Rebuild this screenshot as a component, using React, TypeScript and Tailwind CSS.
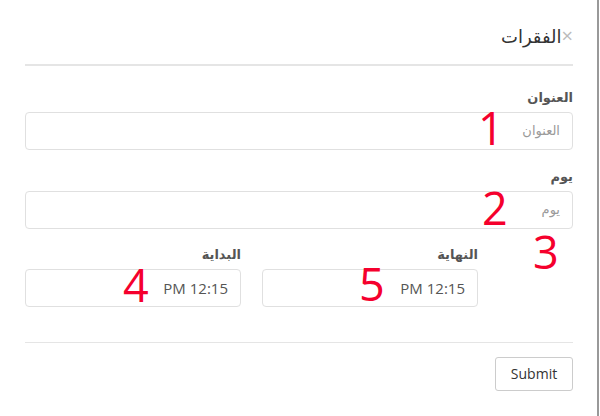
import React from 'react';

const font = { fontFamily: '"Open Sans", "DejaVu Sans", sans-serif' };

const Marker = ({ n, className }: { n: string; className: string }) => (
  <div className={`absolute text-[45px] leading-none text-[#f5002d] ${className}`}>{n}</div>
);

const Field = ({ label, placeholder, value }: { label: string; placeholder?: string; value?: string }) => (
  <div>
    <label className="block text-[13px] font-bold leading-[18px] text-[#555]">{label}</label>
    <div className="mt-[6px] flex h-[38px] items-center rounded-[4px] border border-[#e0e0e0] px-[12px]">
      {value ? (
        <span className="text-[15px] text-[#555]">{value}</span>
      ) : (
        <span className="text-[13px] text-[#999]">{placeholder}</span>
      )}
    </div>
  </div>
);

const App = () => {
  return (
    <div className="relative flex h-[416px] w-[600px] bg-white" style={font}>
      <div dir="rtl" className="w-[597px] pl-[25px] pr-[24px]">
        <div className="flex h-[66px] items-center border-b-2 border-[#e5e5e5] pt-[8px]">
          <span className="text-[20px] leading-none text-[#bbb]">×</span>
          <h4 className="text-[18px] text-[#333]">الفقرات</h4>
        </div>

        <div className="pt-[22px]">
          <Field label="العنوان" placeholder="العنوان" />
          <div className="mt-[17px]">
            <Field label="يوم" placeholder="يوم" />
          </div>
          <div className="mt-[16px] flex gap-[21px]">
            <div className="w-[74px]" />
            <div className="w-[216px]">
              <Field label="النهاية" value="12:15 PM" />
            </div>
            <div className="w-[216px]">
              <Field label="البداية" value="12:15 PM" />
            </div>
          </div>
        </div>

        <div className="mt-[35px] border-t border-[#e5e5e5] pt-[14px]">
          <button className="flex h-[34px] w-[78px] items-center justify-center rounded-[3px] border border-[#ccc] pb-[2px] text-[14px] text-[#333]">
            Submit
          </button>
        </div>
      </div>
      <div className="w-[2px] bg-[#999]" />

      <Marker n="1" className="left-[478px] top-[105px]" />
      <Marker n="2" className="left-[482px] top-[185px]" />
      <Marker n="3" className="left-[533px] top-[229px]" />
      <Marker n="4" className="left-[123px] top-[262px]" />
      <Marker n="5" className="left-[359px] top-[261px]" />
    </div>
  );
};

export default App;
